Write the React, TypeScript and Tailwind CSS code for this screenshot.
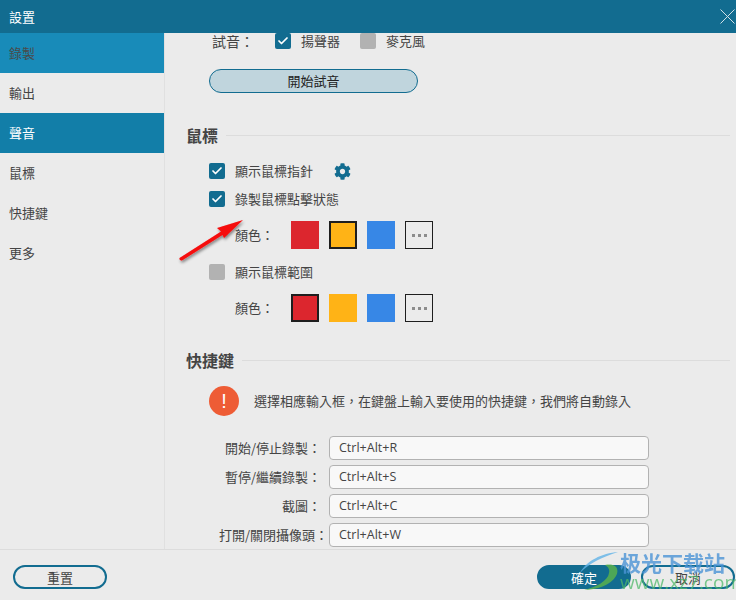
import React from 'react';
import { Check } from 'lucide-react';
import { FaCog } from 'react-icons/fa';

const navItems = [
  { label: '錄製', cls: 'bg-[#188bb9] text-[#4a4a4a]' },
  { label: '輸出', cls: 'text-[#444444]' },
  { label: '聲音', cls: 'bg-[#127ea8] text-white' },
  { label: '鼠標', cls: 'text-[#444444]' },
  { label: '快捷鍵', cls: 'text-[#444444]' },
  { label: '更多', cls: 'text-[#444444]' },
];

const hotkeys = [
  { label: '開始/停止錄製：', value: 'Ctrl+Alt+R', cls: 'mr-[8px]' },
  { label: '暫停/繼續錄製：', value: 'Ctrl+Alt+S', cls: 'mr-[8px]' },
  { label: '截圖：', value: 'Ctrl+Alt+C', cls: 'mr-[8px]' },
  { label: '打開/關閉攝像頭：', value: 'Ctrl+Alt+W', cls: 'mr-[1px]' },
];

const CheckBox = ({ on = true }: { on?: boolean }) => (
  <span className={`flex h-4 w-4 shrink-0 items-center justify-center rounded-[2px] ${on ? 'bg-[#126c90]' : 'bg-[#b2b2b2]'}`}>
    {on && <Check className="h-3 w-3 text-white" strokeWidth={3.5} />}
  </span>
);

const Swatches = ({ selected }: { selected: number }) => {
  const colors = ['bg-[#dc262e]', 'bg-[#ffb316]', 'bg-[#3787e6]'];
  return (
    <div className="flex gap-[10px]">
      {colors.map((c, i) => (
        <span key={c} className={`h-7 w-7 ${c} ${i === selected ? 'border-2 border-[#1e1e1e]' : ''}`} />
      ))}
      <span className="flex h-7 w-7 items-center justify-center gap-[3px] border border-[#1e1e1e]">
        <i className="h-[3px] w-[3px] bg-[#8c8c8c]" />
        <i className="h-[3px] w-[3px] bg-[#8c8c8c]" />
        <i className="h-[3px] w-[3px] bg-[#8c8c8c]" />
      </span>
    </div>
  );
};

const SectionTitle = ({ title }: { title: string }) => (
  <div className="-ml-px flex h-5 items-center gap-2 pr-[6px]">
    <h2 className="text-base font-bold text-[#444444]">{title}</h2>
    <span className="h-px flex-1 bg-[#dcdcdc]" />
  </div>
);

const PillButton = ({ label, cls }: { label: string; cls: string }) => (
  <button className={`h-6 w-[94px] rounded-full border-2 border-[#126c90] text-[13px] leading-none ${cls}`}>{label}</button>
);

export default function App() {
  return (
    <div
      className="relative flex h-[600px] w-[736px] flex-col overflow-hidden bg-[#ebebeb] text-[13px] text-[#444444]"
      style={{ fontFamily: '"Noto Sans CJK TC", "Noto Sans", sans-serif' }}
    >
      {/* Title bar */}
      <header className="flex h-[33px] shrink-0 items-center justify-between bg-[#126c90] pl-[9px] pr-[1px] text-white">
        <span>設置</span>
        <svg width="15" height="15" viewBox="0 0 15 15" className="text-[#cfe0e7]">
          <path d="M0.5 0.5 L14.5 14.5 M14.5 0.5 L0.5 14.5" stroke="currentColor" strokeWidth="1" />
        </svg>
      </header>

      <div className="flex min-h-0 flex-1">
        {/* Sidebar */}
        <nav className="w-[165px] shrink-0 border-r border-[#e0e0e0]">
          {navItems.map((item) => (
            <div key={item.label} className={`flex h-10 items-center pl-[9px] ${item.cls}`}>
              {item.label}
            </div>
          ))}
        </nav>

        {/* Settings content */}
        <main className="min-w-0 flex-1 pl-[22px]">
          <div className="flex h-4 items-center pl-[26px] leading-4">
            <span className="-ml-px w-[63px] text-sm leading-4">試音：</span>
            <CheckBox />
            <span className="ml-[10px] w-[59px]">揚聲器</span>
            <CheckBox on={false} />
            <span className="ml-[10px]">麥克風</span>
          </div>
          <button className="ml-[22px] mt-5 block h-6 w-[209px] rounded-full border border-[#126c90] bg-[#c0d5dd] pb-px text-[13px] leading-none text-[#222222]">
            開始試音
          </button>

          <div className="mt-[32px]">
            <SectionTitle title="鼠標" />
          </div>
          <div className="ml-[22px] mt-[18px] flex h-4 items-center gap-[10px]">
            <CheckBox />
            <span>顯示鼠標指針</span>
            <FaCog className="ml-[11px] h-[17px] w-[17px] text-[#126c90]" />
          </div>
          <div className="ml-[22px] mt-3 flex h-4 items-center gap-[10px]">
            <CheckBox />
            <span>錄製鼠標點擊狀態</span>
          </div>
          <div className="ml-[48px] mt-[14px] flex items-center">
            <span className="w-14">顏色：</span>
            <Swatches selected={1} />
          </div>
          <div className="ml-[22px] mt-[15px] flex h-4 items-center gap-[10px]">
            <CheckBox on={false} />
            <span>顯示鼠標範圍</span>
          </div>
          <div className="ml-[48px] mt-[14px] flex items-center">
            <span className="w-14">顏色：</span>
            <Swatches selected={0} />
          </div>

          <div className="mt-[28px]">
            <SectionTitle title="快捷鍵" />
          </div>
          <div className="ml-[22px] mt-[16px] flex items-center gap-[15px]">
            <span
              className="flex h-[30px] w-[30px] items-center justify-center rounded-full bg-[#ee5c35] text-xl leading-none text-white"
              style={{ fontFamily: '"Liberation Sans", sans-serif' }}
            >
              !
            </span>
            <span>選擇相應輸入框，在鍵盤上輸入要使用的快捷鍵，我們將自動錄入</span>
          </div>
          <div className="mt-5 flex flex-col gap-[5px]">
            {hotkeys.map((row) => (
              <div key={row.value} className="flex items-center">
                <div className="w-[142px] shrink-0 whitespace-nowrap text-right">
                  <span className={row.cls}>{row.label}</span>
                </div>
                <div
                  className="flex h-6 w-[320px] items-center rounded-[4px] border border-[#b2b2b2] bg-[#f8f8f8] pl-[9px] text-[12.5px] text-[#444444]"
                  style={{ fontFamily: '"Open Sans", sans-serif' }}
                >
                  {row.value}
                </div>
              </div>
            ))}
          </div>
        </main>
      </div>

      {/* Footer */}
      <footer className="flex h-[51px] shrink-0 items-start justify-between border-t border-[#dcdcdc] pl-[13px] pr-px pt-[15px]">
        <PillButton label="重置" cls="text-[#444444]" />
        <div className="flex gap-[10px]">
          <PillButton label="確定" cls="bg-[#126c90] text-white" />
          <PillButton label="取消" cls="text-[#444444]" />
        </div>
      </footer>

      {/* Red annotation arrow */}
      <svg className="pointer-events-none absolute left-[170px] top-[210px]" width="85" height="60" viewBox="170 210 85 60">
        <defs>
          <filter id="arrow-shadow" x="-20%" y="-20%" width="140%" height="150%">
            <feDropShadow dx="1" dy="2" stdDeviation="1.5" floodColor="#000000" floodOpacity="0.45" />
          </filter>
        </defs>
        <path
          d="M179.5 258 L221 231.5 L217 228 L243 220 L224 238 L222.5 235 L182 260.5 Q179 261 179.5 258 Z"
          fill="#f50a0a"
          filter="url(#arrow-shadow)"
        />
      </svg>

      {/* Site watermark */}
      <div className="pointer-events-none absolute left-[578px] top-[549px] h-[44px] w-[155px]">
        <svg className="absolute left-0 top-0 opacity-80" width="44" height="44" viewBox="0 0 44 44">
          <path d="M40 3 C24 4 8 12 2 24 C10 15 24 8 40 3 Z" fill="#62b4e8" />
          <path d="M27 16 C37 14 42 19 38 27 C33 36 18 41 6 41 C18 38 30 32 31 24 C32 20 30 18 27 16 Z" fill="#5cb54a" />
        </svg>
        <div className="absolute left-[42px] top-[1px] whitespace-nowrap text-[21px] font-bold leading-[24px] text-[#4c94d6] opacity-80">极光下载站</div>
        <div
          className="absolute left-[42px] top-[24px] whitespace-nowrap text-[19px] leading-[18px] text-[#4fb96a] opacity-75"
          style={{ fontFamily: '"Open Sans", sans-serif' }}
        >
          www.xz7.com
        </div>
      </div>
    </div>
  );
}
